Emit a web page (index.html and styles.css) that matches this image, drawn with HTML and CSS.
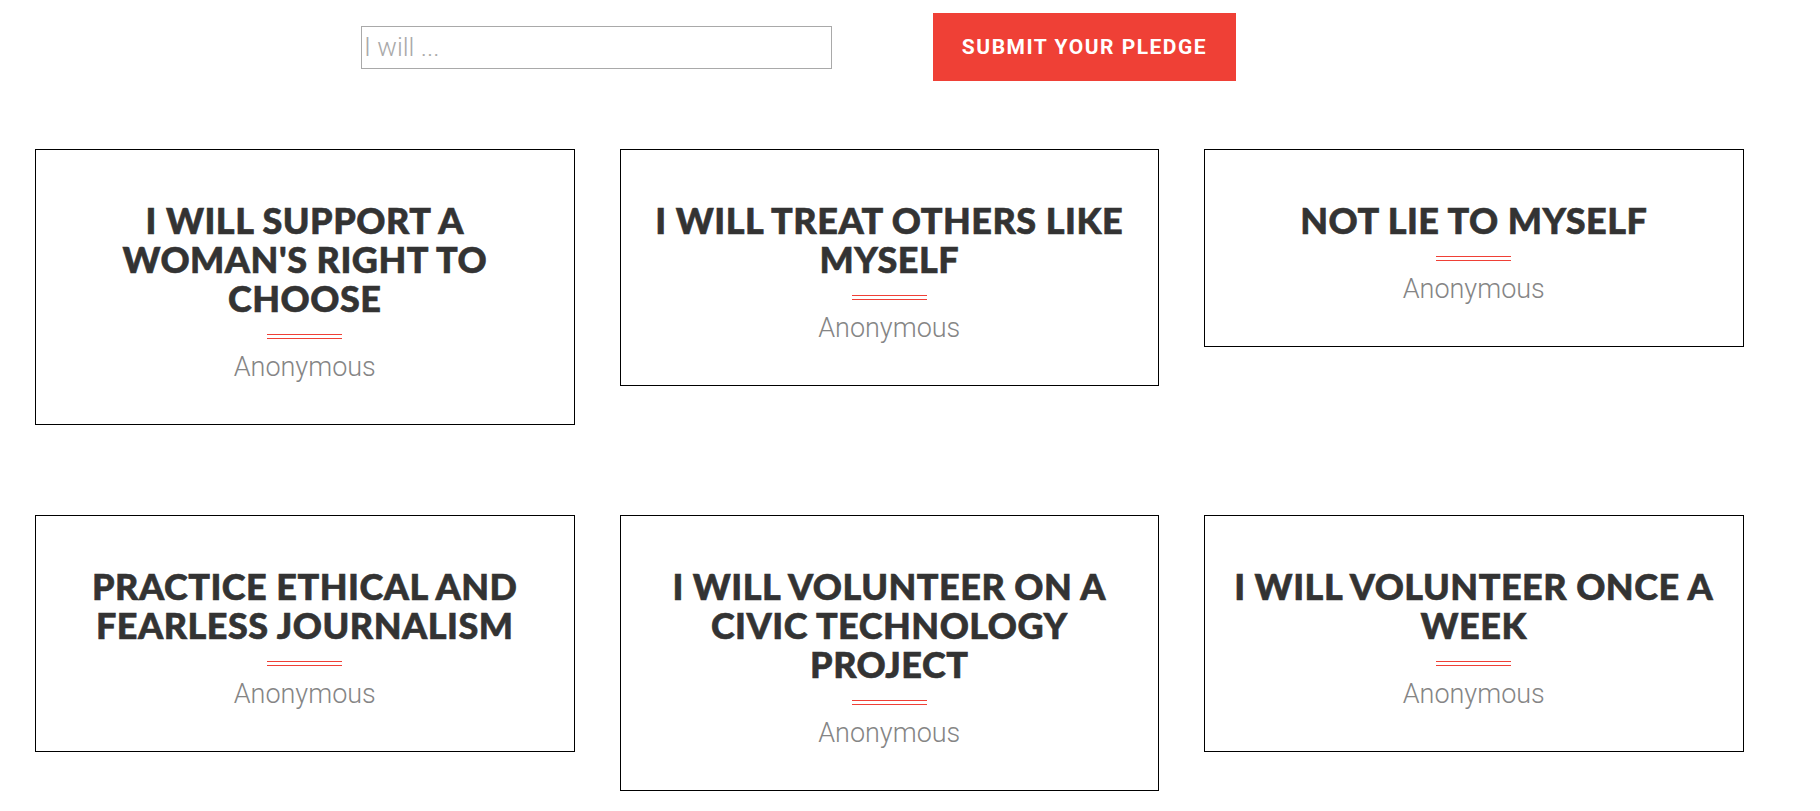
FILE: index.html
```html
<!DOCTYPE html>
<html lang="en">
<head>
<meta charset="UTF-8">
<meta name="viewport" content="width=device-width, initial-scale=1.0">
<title>Pledges</title>
<link rel="stylesheet" href="styles.css">
</head>
<body>

<form class="pledge-form" id="form">
<input class="pledge-input" id="pledge" placeholder="I will ...">
<button class="pledge-submit">Submit your pledge</button>
</form>

<div class="pledges">

<div class="pledge">
<h3>I will support a woman's right to choose</h3>
<div class="divider"></div>
<p class="author">Anonymous</p>
</div>

<div class="pledge">
<h3>I will treat others like myself</h3>
<div class="divider"></div>
<p class="author">Anonymous</p>
</div>

<div class="pledge">
<h3>Not lie to myself</h3>
<div class="divider"></div>
<p class="author">Anonymous</p>
</div>

<div class="pledge">
<h3>Practice ethical and fearless journalism</h3>
<div class="divider"></div>
<p class="author">Anonymous</p>
</div>

<div class="pledge">
<h3>I will volunteer on a civic technology project</h3>
<div class="divider"></div>
<p class="author">Anonymous</p>
</div>

<div class="pledge">
<h3>I will volunteer once a week</h3>
<div class="divider"></div>
<p class="author">Anonymous</p>
</div>

</div>

</body>
</html>
```

FILE: styles.css
```css
body{
margin:0;
background:white;
font-family:Roboto, "Liberation Sans", sans-serif;
color:#333;
}

.pledge-form{
display:flex;
align-items:center;
gap:101px;
padding:13px 0 0 361px;
}

.pledge-input{
box-sizing:border-box;
width:471px;
height:43px;
padding:0 2px;
border:1px solid #a9a9a9;
font-family:Roboto, sans-serif;
font-weight:300;
font-size:26px;
color:#333;
outline:none;
}

.pledge-input::placeholder{
color:#a9a9a9;
}

.pledge-submit{
box-sizing:border-box;
width:303px;
height:68px;
border:none;
background:#ef4036;
color:white;
font-family:Roboto, sans-serif;
font-weight:700;
font-size:21px;
letter-spacing:1.5px;
text-transform:uppercase;
cursor:pointer;
}

.pledges{
display:grid;
grid-template-columns:repeat(3,1fr);
align-items:start;
gap:90px 45px;
padding:0 76.5px 0 35px;
margin-top:68px;
}

.pledge{
border:1px solid #000;
padding:51px 24px 42px;
text-align:center;
}

.pledge h3{
margin:0;
font-family:Lato, sans-serif;
font-weight:900;
font-size:36px;
line-height:39px;
letter-spacing:0.5px;
text-transform:uppercase;
color:#333;
-webkit-text-stroke:0.6px #333;
}

.divider{
width:75px;
height:3px;
margin:16px auto 0;
border-top:1px solid #ef4036;
border-bottom:1px solid #ef4036;
}

.author{
margin:13px 0 0;
font-weight:300;
font-size:27px;
line-height:30px;
color:#858585;
}
```
